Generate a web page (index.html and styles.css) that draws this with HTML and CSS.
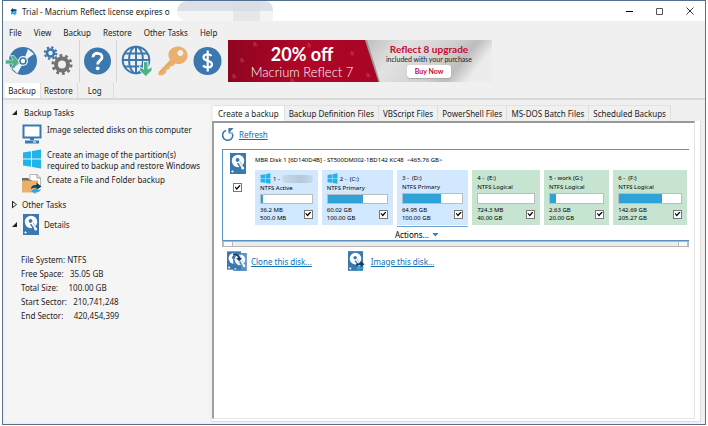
FILE: index.html
```html
<!DOCTYPE html>
<html lang="en">
<head>
<meta charset="utf-8">
<title>Macrium Reflect</title>
<link rel="stylesheet" href="styles.css">
</head>
<body>
<svg class="defs" aria-hidden="true">
  <symbol id="windows" viewBox="0 0 20 20"><path fill="#1fb4ea" d="M1 3.6 9 2.3V9.5H1ZM10 2.1 19 .5V9.5H10ZM1 10.5H9V17.8L1 16.6ZM10 10.5H19V19.6L10 18Z"/></symbol>
  <symbol id="drive" viewBox="0 0 16 21"><path fill="#3b78b0" d="M0 0H16V21H0Z"/><circle cx="8" cy="8" r="6.2" fill="#fff"/><circle cx="7.600" cy="7" r="1.900" fill="#3b78b0"/><path d="M8.500 9.500 12.500 15.500" stroke="#3b78b0" stroke-width="3.600"/><path d="M8.500 8.500 12.500 14.500" stroke="#fff" stroke-width="1.800"/><circle cx="12.700" cy="15" r="1.500" fill="#fff"/><circle cx="2.500" cy="18.500" r="1.100" fill="#fff"/></symbol>
  <symbol id="sync" viewBox="0 0 12 12"><path fill="#173f63" d="M1 7C1 4 3 2.800 6.500 2.900V.5L11.500 4.500 6.500 8V5.700C4 5.500 2.500 5.900 1 7Z"/><path fill="#24aee0" d="M11 7C10.500 9.600 8.500 10.300 5.500 10.200V12L1 9 5.500 6V8C8 8.200 9.500 8 11 7Z"/></symbol>
</svg>
<div class="window">
  <header class="titlebar">
    <svg class="app-icon" viewBox="0 0 12 12"><path fill="#173f63" d="M2 4.500 5.500 1V3H10V6H5.500V8Z"/><path fill="#24aee0" d="M10.500 8 7 11.500V9.500H2.500V7H7V5Z"/></svg>
    <span class="title">Trial - Macrium Reflect license expires o</span><span class="smudge"></span>
    <div class="controls">
      <button aria-label="Minimize"><svg viewBox="0 0 8 8"><path d="M0 4.500H7" stroke="#000"/></svg></button>
      <button aria-label="Maximize"><svg viewBox="0 0 8 8"><path d="M.5 1.500H6.500V7.500H.5Z" fill="none" stroke="#555"/></svg></button>
      <button aria-label="Close"><svg viewBox="0 0 8 8"><path d="M.5 .5 7.500 7.500M7.500 .5 .5 7.500" stroke="#222" stroke-width=".9"/></svg></button>
    </div>
  </header>
  <nav class="menu">
    <button>File</button><button>View</button><button>Backup</button><button>Restore</button><button>Other Tasks</button><button>Help</button>
  </nav>
  <div class="toolbar">
    <button aria-label="Image disk"><svg width="34" height="32" viewBox="0 0 34 32"><circle cx="18" cy="16" r="14" fill="#3b78b0"/><path fill="#eef5fa" d="M20 12 23 4 29 9 22 14ZM14 18.500 7.500 24 12.500 28.500 17 20Z"/><circle cx="18" cy="16" r="5" fill="#eef5fa"/><circle cx="18" cy="16" r="3.800" fill="#3b78b0"/><circle cx="18" cy="16" r="2.200" fill="#fff"/><path fill="#4fb184" stroke="#f0f0f1" stroke-width=".6" d="M.5 15H8L5.500 10.500H9L14 17 9 23.500H5.500L8 19H.5Z"/></svg></button>
    <button aria-label="Settings"><svg width="32" height="32" viewBox="0 0 32 32"><g fill="none" stroke="#3b78b0"><circle cx="7.500" cy="8" r="3.500" stroke-width="2.600"/><circle cx="7.500" cy="8" r="5.700" stroke-width="2.200" stroke-dasharray="2.240 2.240"/></g><g fill="none" stroke="#737375"><circle cx="19" cy="19.500" r="6" stroke-width="4"/><circle cx="19" cy="19.500" r="9" stroke-width="3" stroke-dasharray="2.830 2.830"/></g></svg></button>
    <span class="sep"></span>
    <button aria-label="Help"><svg width="28" height="28" viewBox="0 0 28 28"><circle cx="13.500" cy="14" r="13.500" fill="#3b78b0"/><path d="M9 10.300C9 4.800 18.500 5 18 10.500 17.700 13.500 13.700 13.600 13.700 17.500" fill="none" stroke="#fff" stroke-width="2.800"/><circle cx="13.700" cy="21.300" r="1.900" fill="#fff"/></svg></button>
    <span class="sep"></span>
    <button aria-label="Check for updates"><svg width="32" height="32" viewBox="0 0 32 32"><g fill="none" stroke="#3b78b0" stroke-width="2"><circle cx="15" cy="15" r="13.300"/><ellipse cx="15" cy="15" rx="7" ry="13.300"/><path d="M15 1V29M2 15H28M4 8.500H26M4 21.500H26"/></g><path fill="#4fb184" stroke="#f0f0f1" d="M22.500 16.500H27V24L31 21.500V25.500L24.800 31.500 18.500 25.500V21.500L22.500 24Z"/></svg></button>
    <button aria-label="License key"><svg width="32" height="32" viewBox="0 0 32 32"><path fill="#ecb06d" fill-rule="evenodd" d="M13 15C8 5 17 1 22 1.500 28 2 31 7 30.500 11 30 17 24 20.500 18.500 18.500L16 21 13 21.500 12.500 24 9.500 25 9 28 5 30.500 1.500 30V27ZM23 5A3 3 0 1 0 25 10.500 3 3 0 0 0 23 5Z"/><path d="M3 27 14 16.500" stroke="#d9a064"/></svg></button>
    <button aria-label="Purchase"><svg width="30" height="30" viewBox="0 0 30 30"><circle cx="14.500" cy="15" r="14" fill="#3b78b0"/><path d="M18.500 10C17 7.800 10.500 7.500 10.500 11.500 10.500 15.500 19 13.800 19 18.500 19 22.300 12 22 10 19.500M14.700 4.500V25.500" fill="none" stroke="#fff" stroke-width="2.200"/></svg></button>
    <a class="banner" href="#">
      <svg class="banner-bg" viewBox="0 0 264 42" preserveAspectRatio="none" aria-hidden="true">
        <defs><linearGradient id="silver" x1="0" y1="0" x2="1" y2=".25"><stop offset="0" stop-color="#b8b8b9"/><stop offset=".35" stop-color="#e2e2e3"/><stop offset=".7" stop-color="#cfcfd0"/><stop offset=".85" stop-color="#bdbdbe"/><stop offset="1" stop-color="#ececed"/></linearGradient>
        <linearGradient id="red"><stop offset="0" stop-color="#8f0520"/><stop offset=".5" stop-color="#b00628"/><stop offset="1" stop-color="#a80525"/></linearGradient></defs>
        <path fill="url(#silver)" d="M130 0H264V42H130Z"/><path fill="#999" d="M137 0H139L152 42H150Z"/><path fill="url(#red)" d="M0 0H137L150.500 42H0Z"/>
        <g fill="#c9505c" opacity=".5"><path id="star" d="M14 17.500 15 19.500 17 20 15.500 21 15.500 23 14 22 12 22.500 13 20.500 12 19Z"/><use href="#star" x="67" y="-15"/><use href="#star" x="-8" y="16"/><use href="#star" x="126" y="15"/><use href="#star" x="13" y="-16"/><use href="#star" x="110" y="-7"/><use href="#star" x="50" y="20"/></g>
      </svg>
      <span class="offer"><strong>20% off</strong><span>Macrium Reflect 7</span></span>
      <span class="upgrade"><strong>Reflect 8 upgrade</strong><span>included with your purchase</span><span class="buy">Buy Now</span></span>
    </a>
  </div>
  <div class="tabs main-tabs"><button class="active">Backup</button><button>Restore</button><button>Log</button></div>
  <div class="body">
    <aside class="side">
      <h2><i class="open"></i>Backup Tasks</h2>
      <a class="task" href="#"><svg viewBox="0 0 20 20"><path d="M1.500 1.500H18.500V13.500H1.500Z" fill="#fff" stroke="#3b78b0" stroke-width="2"/><path d="M8 14H12V16H8ZM3 16.500H17V19.500H3Z" fill="#3b78b0"/><path d="M11 18H14" stroke="#fff"/></svg><span>Image selected disks on this computer</span></a>
      <a class="task" href="#"><svg viewBox="0 0 20 20"><use href="#windows"/></svg><span>Create an image of the partition(s)<br>required to backup and restore Windows</span></a>
      <a class="task" href="#"><svg viewBox="0 0 20 20"><path d="M8 .5H15L18.500 4V13H8Z" fill="#fff" stroke="#999" stroke-width=".7"/><path d="M15 .5V4H18.500" fill="none" stroke="#777" stroke-width=".7"/><path d="M0 4H6L8 6H10V8H0Z" fill="#6c6c6c"/><path d="M0 6.500H16V18.500H0Z" fill="#ecb06d"/><use href="#sync" x="8" y="8" width="12" height="12"/></svg><span>Create a File and Folder backup</span></a>
      <h2 class="other"><i class="closed"></i>Other Tasks</h2>
      <h2 class="details"><i class="open"></i><svg class="drive"><use href="#drive"/></svg>Details</h2>
      <ul class="facts">
        <li>File System: NTFS</li>
        <li>Free Space:&nbsp;&nbsp; 35.05 GB</li>
        <li>Total Size:&nbsp; &nbsp;&nbsp; 100.00 GB</li>
        <li>Start Sector:&nbsp;&nbsp; 210,741,248</li>
        <li>End Sector:&nbsp; &nbsp;&nbsp; 420,454,399</li>
      </ul>
    </aside>
    <main class="content">
      <div class="tabs sub-tabs"><button class="active">Create a backup</button><button>Backup Definition Files</button><button>VBScript Files</button><button>PowerShell Files</button><button>MS-DOS Batch Files</button><button>Scheduled Backups</button></div>
      <div class="frame"><div class="pane">
        <div class="refresh"><svg viewBox="0 0 12 13"><path d="M4 2.500A5 5 0 1 0 10.500 6" fill="none" stroke="#3b78b0" stroke-width="1.700"/><path d="M6.500 0H11.500L7 5Z" fill="#3b78b0"/><path d="M7 1V5H11" fill="none" stroke="#3b78b0"/></svg><a href="#">Refresh</a></div>
        <section class="disk">
          <div class="disk-side"><svg class="drive"><use href="#drive"/></svg><input type="checkbox" checked aria-label="Disk 1"></div>
          <div class="disk-main">
            <h3>MBR Disk 1 [6D140D4B] - ST500DM002-1BD142 KC48&nbsp; &lt;465.76 GB&gt;</h3>
            <div class="parts">
              <label class="part" style="flex-grow:62"><span class="name"><svg><use href="#windows"/></svg>1 - <i class="hidden-name"></i></span><span>NTFS Active</span><span class="bar"><b style="width:4%"></b></span><span class="foot"><span>36.2 MB<br>500.0 MB</span><input type="checkbox" checked></span></label>
              <label class="part" style="flex-grow:72"><span class="name"><svg><use href="#windows"/></svg>2 -&nbsp; (C:)</span><span>NTFS Primary</span><span class="bar"><b style="width:60%"></b></span><span class="foot"><span>60.02 GB<br>100.00 GB</span><input type="checkbox" checked></span></label>
              <label class="part selected" style="flex-grow:72"><span class="name">3 -&nbsp; (D:)</span><span>NTFS Primary</span><span class="bar"><b style="width:65%"></b></span><span class="foot"><span>64.95 GB<br>100.00 GB</span><input type="checkbox" checked></span></label>
              <label class="part logical" style="flex-grow:68"><span class="name">4 -&nbsp; (E:)</span><span>NTFS Logical</span><span class="bar"></span><span class="foot"><span>724.3 MB<br>40.00 GB</span><input type="checkbox" checked></span></label>
              <label class="part logical" style="flex-grow:65"><span class="name">5 - work (G:)</span><span>NTFS Logical</span><span class="bar"><b style="width:12%"></b></span><span class="foot"><span>2.63 GB<br>20.00 GB</span><input type="checkbox" checked></span></label>
              <label class="part logical" style="flex-grow:75"><span class="name">6 -&nbsp; (F:)</span><span>NTFS Logical</span><span class="bar"><b style="width:69%"></b></span><span class="foot"><span>142.69 GB<br>205.27 GB</span><input type="checkbox" checked></span></label>
            </div>
            <button class="actions">Actions...<i></i></button>
          </div>
        </section>
        <div class="scroll"><i></i><i></i></div>
        <div class="links">
          <a href="#"><svg viewBox="0 0 20 20"><use href="#drive" width="14" height="19" x="0" y="0"/><g opacity=".8"><use href="#drive" width="14" height="18" x="6" y="2"/></g><path d="M6 3C10 2 13 4 13 7H15L12 10 9 7H11C11 5 9 4 6 4Z" fill="#173f63"/></svg><span>Clone this disk...</span></a>
          <a href="#"><svg viewBox="0 0 20 20"><use href="#drive" width="15" height="20" x="1" y="0"/><use href="#sync" width="10" height="11" x="8" y="9"/></svg><span>Image this disk...</span></a>
        </div>
      </div></div>
    </main>
  </div>
</div>
</body>
</html>
```

FILE: styles.css
```css
* { box-sizing: border-box; }
body { margin: 0; padding: 0 2px 1px; height: 100vh; display: flex; background: #fff; color: #1c1c1c; font: 8px/11px "Noto Sans", "Open Sans", sans-serif; }
button { margin: 0; padding: 0; border: 0; background: none; font: inherit; color: inherit; }
h2, h3 { margin: 0; font: inherit; }
a { color: #0b6fb5; }
svg { display: block; flex: none; }
.defs { position: absolute; width: 0; height: 0; }
.window { flex: 1; display: flex; flex-direction: column; border: 1px solid #55708c; background: #f0f0f1; min-width: 0; }

.titlebar { display: flex; align-items: center; height: 20px; flex: none; background: #fff; padding-left: 6px; }
.app-icon { width: 9px; height: 9px; margin-right: 4px; }
.smudge { align-self: stretch; width: 96px; margin-left: 7px; border-radius: 12px 10px 0 12px; background: linear-gradient(90deg, transparent 58%, #d9dade80 58% 86%, transparent 86%), linear-gradient(#dce1e9 50%, #f4f4f5 50%); }
.controls { display: flex; margin-left: auto; gap: 22px; padding-right: 11px; }
.controls svg { width: 8px; height: 8px; }

.menu { display: flex; gap: 12px; padding: 3px 6px 0; height: 19px; flex: none; }

.toolbar { display: flex; align-items: center; gap: 4px; height: 42px; flex: none; padding-left: 2px; }
.sep { width: 1px; align-self: stretch; background: #d4d4d5; }
.banner { position: relative; display: flex; align-self: stretch; width: 264px; margin-left: 1px; color: #fff; text-decoration: none; font-family: Lato, sans-serif; }
.banner-bg { position: absolute; inset: 0; width: 100%; height: 100%; }
.offer, .upgrade { position: relative; display: flex; flex-direction: column; align-items: center; }
.offer { width: 148px; padding-top: 4px; font-size: 13px; font-weight: 300; line-height: 16px; }
.offer strong { font-size: 18px; font-weight: 700; line-height: 20px; }
.upgrade { width: 106px; padding-top: 3px; color: #222; font-size: 7px; line-height: 9px; }
.upgrade strong { font-size: 10px; line-height: 12px; color: #c00b2e; }
.buy { margin-top: 1px; padding: 2px 8px; border-radius: 3px; background: #fff; color: #c00b2e; font-weight: 700; box-shadow: 0 1px 1px #aaa; }

.tabs { display: flex; flex: none; }
.tabs button { border-right: 1px solid #dedede; }
.tabs .active { background: #fff; }
.main-tabs { height: 18px; padding: 1px 2px 0; border-bottom: 2px solid #d9d9da; }
.main-tabs button { padding: 0 4px 0 3px; min-width: 36px; }

.body { flex: 1; display: flex; gap: 2px; min-height: 0; padding: 4px 4px 2px 2px; }
.side { flex: 0 0 205px; background: #f5f5f5; padding: 3px 0 0 7px; }
.side h2 { display: flex; align-items: center; }
.side i { width: 5px; height: 5px; margin-right: 7px; background: #222; clip-path: polygon(100% 0, 100% 100%, 0 100%); }
.side i.closed { height: 8px; margin-right: 5px; clip-path: polygon(0 0, 100% 50%, 0 100%, 0 0, 1px 2px, 1px 6px, 4px 50%, 1px 2px); }
.task { display: flex; gap: 5px; margin-left: 10px; height: 24px; margin-top: 1px; color: inherit; text-decoration: none; }
.side h2 + .task { margin-top: 6px; }
.task svg { width: 20px; height: 20px; }
.task span { white-space: nowrap; }
.side .other { margin-top: 1px; }
.side .details { margin-top: 4px; }
.details .drive { margin-right: 5px; }
.details i.open { margin-right: 6px; }
.drive { width: 16px; height: 21px; }
.facts { list-style: none; margin: 18px 0 0 9px; padding: 0; line-height: 14px; }

.content { flex: 1; display: flex; flex-direction: column; min-width: 0; padding-top: 1px; }
.sub-tabs { padding-left: 1px; }
.sub-tabs button { height: 16px; padding: 0 4px; border-top: 1px solid #e2e2e2; }
.sub-tabs .active { padding: 0 5px; }
.frame { flex: 1; display: flex; padding: 0 5px 2px 0; background: #fff; border-right: 1px solid #dcdcdc; border-bottom: 1px solid #dcdcdc; }
.pane { flex: 1; min-width: 0; border: 1px solid #e4e4e4; border-left: 2px solid #a0a0a0; border-top: 2px solid #999; padding: 4px 5px 0 8px; }
.refresh { display: flex; align-items: center; gap: 5px; height: 14px; }
.refresh svg { width: 12px; height: 13px; }
.disk { display: flex; margin-top: 8px; height: 92px; border: 1px solid #5a93c4; border-right: 0; color: #000; font-size: 6px; line-height: 8px; }
.disk-side { display: flex; flex-direction: column; align-items: center; width: 32px; padding: 3px 3px 0 0; gap: 9px; }
.disk-main { flex: 1; min-width: 0; padding: 6px 2px 0 0; }
.parts { display: flex; gap: 4px; margin-top: 6px; }
.part { position: relative; flex: 1 1 0; min-width: 0; height: 55px; padding: 3px 5px; background: #d2e8fe; display: flex; flex-direction: column; white-space: nowrap; }
.logical { background: #c6e4cf; }
.selected::after { content: ""; position: absolute; left: 0; right: 0; bottom: -2px; border-bottom: 1px solid #6fa4d3; }
.name { display: flex; align-items: center; height: 11px; gap: 2px; }
.name svg { width: 11px; height: 11px; }
.hidden-name { flex: 1; height: 8px; border-radius: 4px; background: linear-gradient(90deg, #c9dbea, #b4c8dc 60%, #c6daee); }
.bar { display: block; height: 11px; margin-top: 2px; border: 1px solid #b9bcc0; background: #fff; }
.bar b { display: block; height: 100%; background: #2fa3d9; }
.foot { display: flex; justify-content: space-between; align-items: center; margin-top: 2px; }
input[type="checkbox"] { appearance: none; width: 9px; height: 9px; margin: 0; border: 1px solid #777; background: #fff; display: grid; place-items: center; }
input[type="checkbox"]:checked::before { content: ""; width: 6px; height: 5px; background: #000; clip-path: polygon(0 40%, 15% 30%, 35% 60%, 85% 0, 100% 15%, 38% 100%); }
.actions { display: flex; align-items: center; gap: 3px; margin: 4px 0 0 140px; font: 8px/11px "Noto Sans", "Open Sans", sans-serif; }
.actions i { width: 7px; height: 4px; background: #2b7fc4; clip-path: polygon(0 0, 100% 0, 50% 100%); }
.scroll { display: flex; justify-content: space-between; height: 6px; border: 1px solid #b5b5b5; background: #ececec; }
.scroll i { width: 10px; background: #fafafa; border: solid #bbb; border-width: 0 1px; }
.links { display: flex; gap: 35px; margin: 4px 0 0 5px; }
.links a { display: flex; align-items: center; gap: 4px; }
.links svg { width: 20px; height: 20px; }
```
